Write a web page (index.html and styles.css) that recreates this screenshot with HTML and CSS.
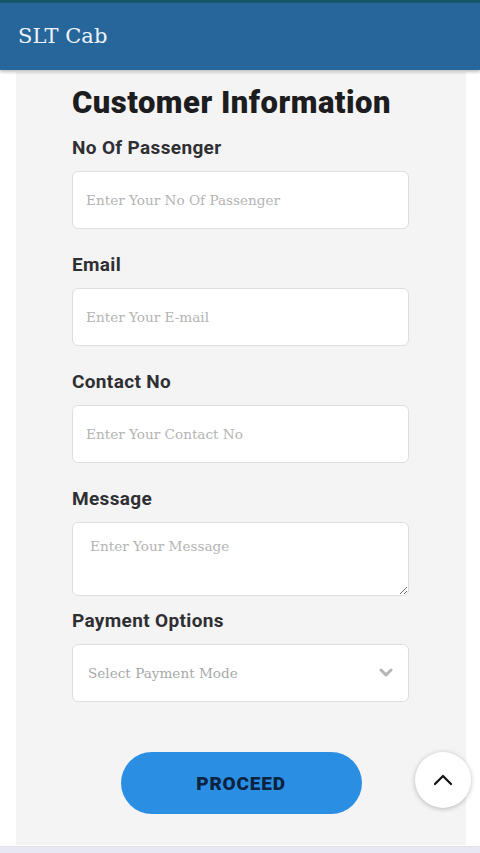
FILE: index.html
```html
<!DOCTYPE html>
<html>
  <head>
    <title>SLT Cab</title>
    <link rel="stylesheet" href="styles.css">
  </head>
  <body>
    <header class="topbar">
      <span class="brand">SLT Cab</span>
    </header>

    <main class="panel">
      <h1>Customer Information</h1>

      <label class="field-label" for="passengers">No Of Passenger</label>
      <input class="field" id="passengers" type="text" placeholder="Enter Your No Of Passenger" />

      <label class="field-label" for="email">Email</label>
      <input class="field" id="email" type="text" placeholder="Enter Your E-mail" />

      <label class="field-label" for="contact">Contact No</label>
      <input class="field" id="contact" type="text" placeholder="Enter Your Contact No" />

      <label class="field-label" for="message">Message</label>
      <textarea class="field message" id="message" placeholder="Enter Your Message"></textarea>

      <label class="field-label pay-label" for="payment">Payment Options</label>
      <div class="select-wrap">
        <select class="field select" id="payment">
          <option>Select Payment Mode</option>
        </select>
        <svg class="chevron" width="14" height="10" viewBox="0 0 14 10">
          <path d="M2 2 L7 7 L12 2" fill="none" stroke="#b5b5b5" stroke-width="3" stroke-linecap="round" stroke-linejoin="round" />
        </svg>
      </div>

      <div class="actions">
        <button class="proceed">PROCEED</button>
      </div>
    </main>

    <button class="to-top" aria-label="Back to top">
      <svg width="20" height="12" viewBox="0 0 20 12">
        <path d="M2 10 L10 2 L18 10" fill="none" stroke="#111" stroke-width="2.2" stroke-linecap="round" stroke-linejoin="round" />
      </svg>
    </button>

    <div class="bottom-strip"></div>
  </body>
</html>
```

FILE: styles.css
```css
body {
  margin: 0;
  background-color: #ffffff;
  font-family: Roboto, "Liberation Sans", sans-serif;
  height: 853px;
  overflow: hidden;
  position: relative;
}
.topbar {
  height: 67px;
  border-top: 3px solid #17576b;
  background-color: #27669b;
  box-shadow: 0 2px 3px rgba(0, 0, 0, 0.25);
  display: flex;
  align-items: center;
  padding-left: 18px;
  position: relative;
  z-index: 1;
}
.brand {
  font-family: "DejaVu Serif", serif;
  font-size: 21px;
  color: #eef4fa;
  margin-top: -2px;
}
.panel {
  margin: 2px 14px 0 16px;
  height: 773px;
  background-color: #f4f4f4;
  padding: 0 56px;
  display: flex;
  flex-direction: column;
}
h1 {
  font-family: Roboto, sans-serif;
  font-weight: 900;
  font-size: 31px;
  line-height: 36px;
  color: #1d1d1f;
  margin: 13px 0 16px;
  letter-spacing: 0.5px;
}
.field-label {
  font-weight: 700;
  font-size: 19px;
  line-height: 22px;
  color: #2f2f33;
  margin-bottom: 12px;
  letter-spacing: 0.35px;
}
.field {
  box-sizing: border-box;
  width: 337px;
  height: 58px;
  border: 1px solid #dedede;
  border-radius: 6px;
  background-color: #ffffff;
  padding: 0 13px;
  font-family: "DejaVu Serif", serif;
  font-size: 13.6px;
  color: #333;
  margin-bottom: 25px;
  outline: none;
}
.field::placeholder {
  color: #b4b4b4;
}
.message {
  height: 74px;
  resize: vertical;
  padding: 15px 17px;
  margin-bottom: 14px;
}
.select-wrap {
  position: relative;
  width: 337px;
}
.select {
  appearance: none;
  color: #a8a8a8;
  padding-left: 15px;
  margin-bottom: 0;
}
.chevron {
  position: absolute;
  right: 16px;
  top: 24px;
}
.actions {
  display: flex;
  justify-content: center;
  margin-top: 50px;
}
.proceed {
  width: 241px;
  height: 62px;
  border: none;
  border-radius: 31px;
  background-color: #2a8fe3;
  color: #0b2240;
  font-family: Roboto, sans-serif;
  font-weight: 900;
  font-size: 19px;
  letter-spacing: 0.8px;
}
.to-top {
  position: absolute;
  left: 415px;
  top: 752px;
  width: 56px;
  height: 56px;
  border: none;
  border-radius: 50%;
  background-color: #ffffff;
  box-shadow: 0 1px 5px rgba(0, 0, 0, 0.25);
  display: flex;
  align-items: center;
  justify-content: center;
  padding: 0;
}
.bottom-strip {
  position: absolute;
  left: 0;
  right: 0;
  bottom: 0;
  height: 6px;
  background-color: #e8e8f4;
  border-top: 1px solid #e2e2e2;
}
```
